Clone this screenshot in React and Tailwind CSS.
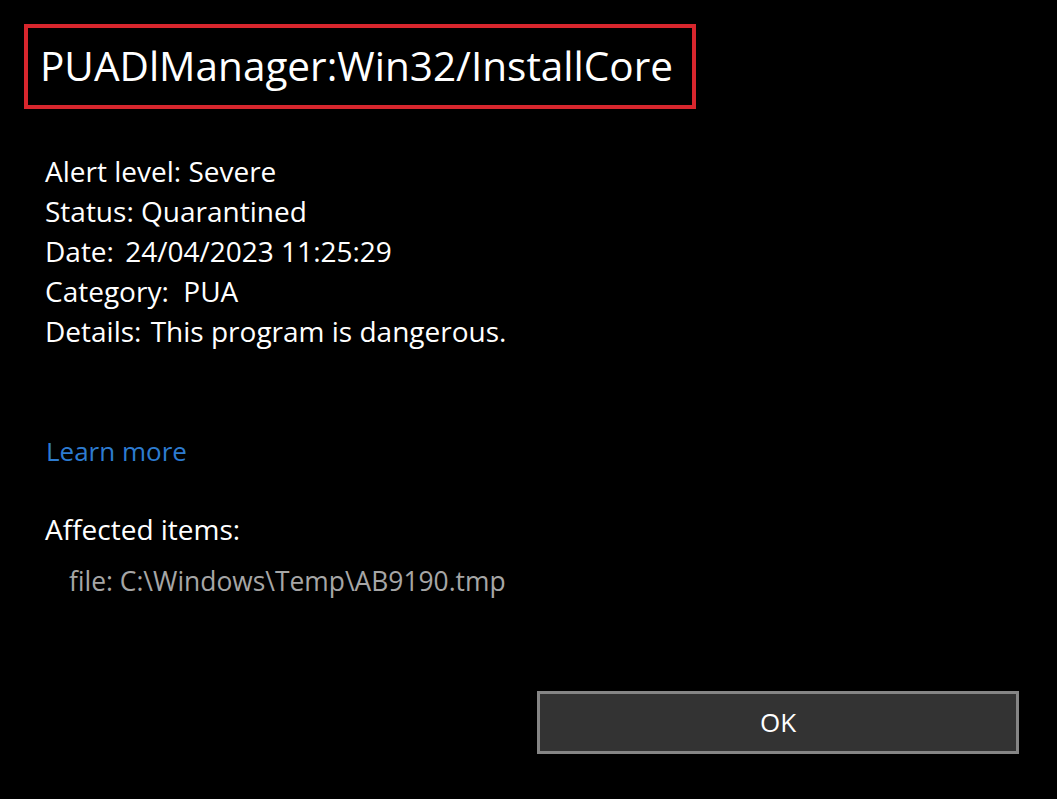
export default function App() {
  return (
    <div className="w-[1057px] h-[799px] bg-black text-white overflow-hidden flex flex-col" style={{ fontFamily: '"Open Sans", "Noto Sans", sans-serif' }}>
      <div className="pt-[24px] pl-[24px]">
        <div className="inline-flex items-center border-[4px] border-[#d8262d] h-[85px] pl-[12px] pr-[19px]">
          <span className="text-[40.5px] leading-none text-white">PUADlManager:Win32/InstallCore</span>
        </div>
      </div>
      <div className="pl-[45px] pt-[42px] flex flex-col text-[28px] leading-[40px]">
        <div>Alert level: Severe</div>
        <div>Status: Quarantined</div>
        <div>Date: <span className="ml-[4px]">24/04/2023 11:25:29</span></div>
        <div>Category: &nbsp;PUA</div>
        <div>Details: <span className="ml-[2px]">This program is dangerous.</span></div>
      </div>
      <div className="pl-[46px] pt-[80px] text-[26px] leading-[40px] text-[#2d7bd0]">Learn more</div>
      <div className="pl-[45px] pt-[38px] text-[28px] leading-[40px]">Affected items:</div>
      <div className="pl-[69px] pt-[12px] text-[26.4px] leading-[40px] text-[#a6a6a6]">file: C:\Windows\Temp\AB9190.tmp</div>
      <div className="flex justify-end pr-[38px] pt-[90px]">
        <button className="w-[482px] h-[63px] border-[3px] border-[#858585] bg-[#333333] text-[26px] text-white flex items-center justify-center">OK</button>
      </div>
    </div>
  );
}
